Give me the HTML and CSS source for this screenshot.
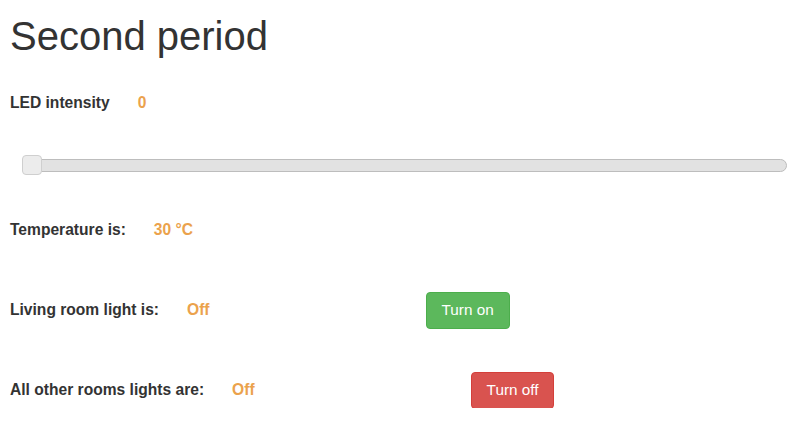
FILE: index.html
```html
<!DOCTYPE html>
<html>
<head>
<meta charset="utf-8">
<link rel="stylesheet" href="styles.css">
</head>
<body>
<h1 class="title">Second period</h1>
<div class="row row-led">
  <span class="label">LED intensity</span>
  <span class="value">0</span>
</div>
<div class="slider">
  <div class="track"></div>
  <div class="thumb"></div>
</div>
<div class="row row-temp">
  <span class="label">Temperature is:</span>
  <span class="value">30 °C</span>
</div>
<div class="row row-btn row-living">
  <span class="label">Living room light is:</span>
  <span class="value">Off</span>
  <button class="btn btn-on">Turn on</button>
</div>
<div class="row row-btn row-all">
  <span class="label">All other rooms lights are:</span>
  <span class="value">Off</span>
  <button class="btn btn-off">Turn off</button>
</div>
</body>
</html>
```
FILE: styles.css
```css
html, body {
  margin: 0;
  background: #ffffff;
}
body {
  padding: 14px 13px 0 10px;
  font-family: "Liberation Sans", Arial, sans-serif;
  color: #333333;
}
.title {
  margin: 0;
  font-size: 40px;
  line-height: 44px;
  font-weight: normal;
  color: #333333;
}
.row {
  display: flex;
  align-items: center;
  font-size: 15.6px;
  line-height: 20px;
  font-weight: bold;
}
.label {
  color: #333333;
}
.value {
  margin-left: 28px;
  color: #eba24c;
}
.row-led {
  margin-top: 35px;
}
.slider {
  position: relative;
  margin: 42px 0 0 12px;
  height: 20px;
}
.track {
  position: absolute;
  left: 0;
  right: 0;
  top: 4px;
  height: 11px;
  background: #e2e2e2;
  border: 1px solid #bdbdbd;
  border-radius: 7px;
}
.thumb {
  position: absolute;
  left: 0;
  top: 0;
  width: 18px;
  height: 18px;
  background: #ececec;
  border: 1px solid #cfcfcf;
  border-radius: 4px;
}
.row-temp {
  margin-top: 45px;
}
.row-btn {
  height: 36px;
}
.row-living {
  margin-top: 52px;
}
.row-all {
  margin-top: 44px;
}
.btn {
  margin-left: 216px;
  height: 37px;
  padding: 0 15px;
  border: 1px solid transparent;
  border-radius: 4px;
  font-family: "Liberation Sans", Arial, sans-serif;
  font-size: 15.3px;
  font-weight: normal;
  color: #ffffff;
}
.btn-on {
  background: #5cb85c;
  border-color: #4cae4c;
}
.btn-off {
  background: #d9534f;
  border-color: #d43f3a;
}
```
